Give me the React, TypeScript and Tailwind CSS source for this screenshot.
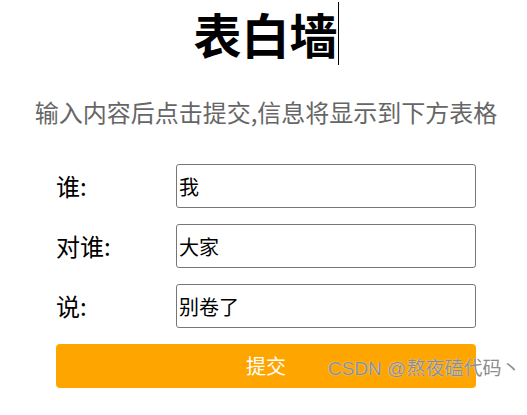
import * as React from "react";

const fields = [
  { label: "谁:", value: "我" },
  { label: "对谁:", value: "大家" },
  { label: "说:", value: "别卷了" },
];

export default function App() {
  return (
    <div className="relative w-full h-[415px] bg-white pl-[5px] font-['Microsoft_YaHei','Noto_Sans_CJK_SC',sans-serif] text-black">
      <div className="flex flex-col items-center">
        <h1 className="mt-[-2px] flex items-center text-[48px] font-bold leading-[70px]">
          表白墙
          <span className="inline-block w-px h-[63px] bg-black" />
        </h1>

        <p className="mt-[28px] text-[24px] leading-[32px] text-[#666666]">
          输入内容后点击提交,信息将显示到下方表格
        </p>

        <div className="mt-[36px] flex w-[420px] flex-col gap-[16px]">
          {fields.map((f) => (
            <div key={f.label} className="flex h-[44px] items-center">
              <label className="w-[120px] text-[24px] leading-[32px]">{f.label}</label>
              <input
                defaultValue={f.value}
                className="h-[44px] w-[300px] rounded-[3px] border border-[#767676] px-[2px] text-[20px] text-black outline-none"
              />
            </div>
          ))}
          <button className="h-[44px] w-[420px] rounded-[4px] bg-[#ffa500] text-[20px] text-white">
            提交
          </button>
        </div>
      </div>

      <div className="absolute left-[328px] top-[357px] text-[19px] leading-[24px] text-[#8c8c8c] [text-shadow:0_0_1px_#ffffff] font-['Liberation_Sans','Noto_Sans_CJK_SC',sans-serif]">
        CSDN @熬夜磕代码丶
      </div>
    </div>
  );
}
